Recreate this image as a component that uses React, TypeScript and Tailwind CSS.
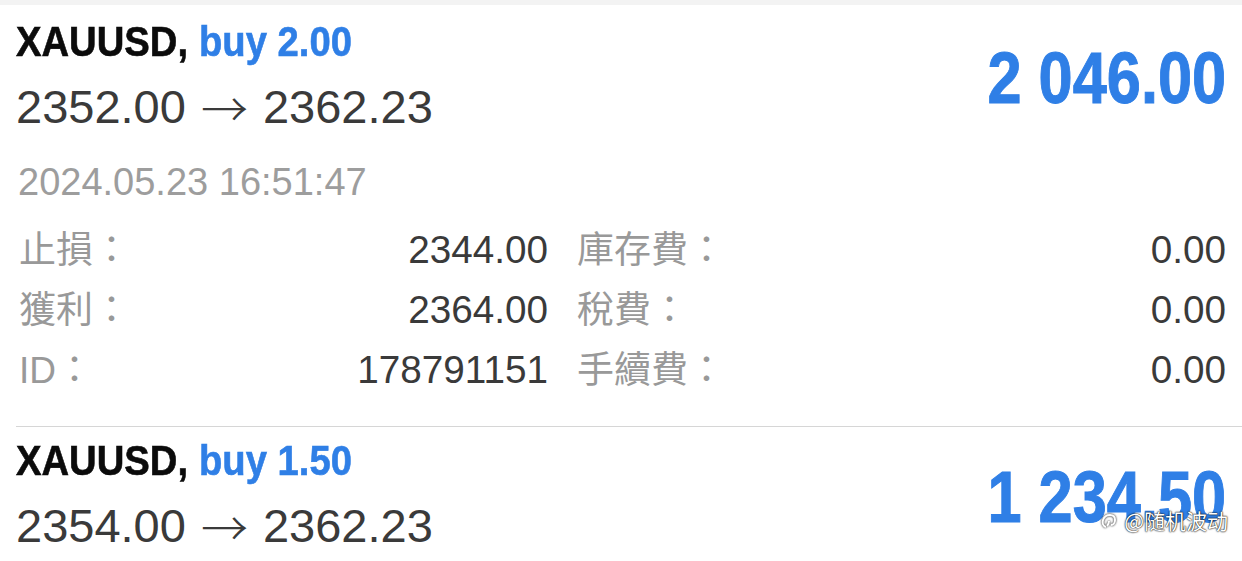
import React from 'react';

const num = { fontFamily: '"Liberation Sans", Arial, sans-serif' };
const cjk = { fontFamily: '"Liberation Sans", "Noto Sans CJK TC", sans-serif' };
const arrow = { fontFamily: '"Noto Sans CJK TC", sans-serif' };

type Trade = {
  symbol: string;
  side: string;
  volume: string;
  open: string;
  close: string;
  profit: string;
};

const TradeHeader: React.FC<{ t: Trade }> = ({ t }) => (
  <div className="flex items-center justify-between">
    <div>
      <div className="h-[52px] flex items-center text-[42px] font-bold leading-none [-webkit-text-stroke:0.6px_currentColor]" style={num}>
        <span className="inline-block origin-left scale-x-[0.91] whitespace-nowrap">
          <span className="text-[#0b0b0b]">{t.symbol},</span>
          <span className="ml-[12px] text-[#2f7fe6]">{t.side} {t.volume}</span>
        </span>
      </div>
      <div className="mt-[10px] h-[56px] flex items-center text-[47px] leading-none text-[#3a3a3a]" style={num}>
        <span>{t.open}</span>
        <span className="mx-[15px] font-light" style={arrow}>→</span>
        <span>{t.close}</span>
      </div>
    </div>
    <div className="pt-[4px] text-[73px] font-bold leading-none text-[#2f7fe6] [-webkit-text-stroke:1px_currentColor]" style={num}>
      <span className="inline-block origin-right scale-x-[0.84]">{t.profit}</span>
    </div>
  </div>
);

const details = [
  ['止損：', '2344.00', '庫存費：', '0.00'],
  ['獲利：', '2364.00', '稅費：', '0.00'],
  ['ID：', '178791151', '手續費：', '0.00'],
];

export default function App() {
  const first: Trade = { symbol: 'XAUUSD', side: 'buy', volume: '2.00', open: '2352.00', close: '2362.23', profit: '2 046.00' };
  const second: Trade = { symbol: 'XAUUSD', side: 'buy', volume: '1.50', open: '2354.00', close: '2362.23', profit: '1 234.50' };

  return (
    <div className="relative w-[1242px] h-[561px] overflow-hidden bg-white">
      <div className="h-[5px] bg-[#f3f3f3]" />

      <div className="px-4 pt-[11px]">
        <TradeHeader t={first} />

        <div className="mt-[24px] h-[48px] flex items-center pl-[2px] text-[38px] leading-none text-[#9d9d9d]" style={num}>
          2024.05.23 16:51:47
        </div>

        <div className="mt-[14px] grid grid-cols-[532px_1fr] gap-x-[29px]">
          {details.map(([l1, v1, l2, v2]) => (
            <React.Fragment key={l1}>
              <div className="h-[60px] flex items-center justify-between">
                <span className="pl-[3px] text-[37px] leading-none text-[#999999]" style={cjk}>{l1}</span>
                <span className="text-[38.7px] leading-none text-[#3a3a3a]" style={num}>{v1}</span>
              </div>
              <div className="h-[60px] flex items-center justify-between">
                <span className="text-[37px] leading-none text-[#999999]" style={cjk}>{l2}</span>
                <span className="text-[38.7px] leading-none text-[#3a3a3a]" style={num}>{v2}</span>
              </div>
            </React.Fragment>
          ))}
        </div>
      </div>

      <div className="ml-4 mt-[26px] border-t border-[#d6d6d6]" />

      <div className="px-4 pt-[8px]">
        <TradeHeader t={second} />
      </div>

      <div className="absolute right-[14px] top-[510px] flex items-center gap-[6px] text-[21px] leading-none text-white [text-shadow:0_0_2px_#000,0_0_1px_#000]" style={{ fontFamily: '"Noto Sans CJK SC", sans-serif' }}>
        <svg width="18" height="18" viewBox="0 0 18 18" fill="none" stroke="white" strokeWidth="2" className="drop-shadow-[0_0_1px_#000]">
          <path d="M6 15c-3-1-4-4-3-7s4-5 7-5 5 2 5 5-2 5-4 5" />
          <path d="M9 9c0 2-1 4-2 5" />
        </svg>
        <span>@随机波动</span>
      </div>
    </div>
  );
}
